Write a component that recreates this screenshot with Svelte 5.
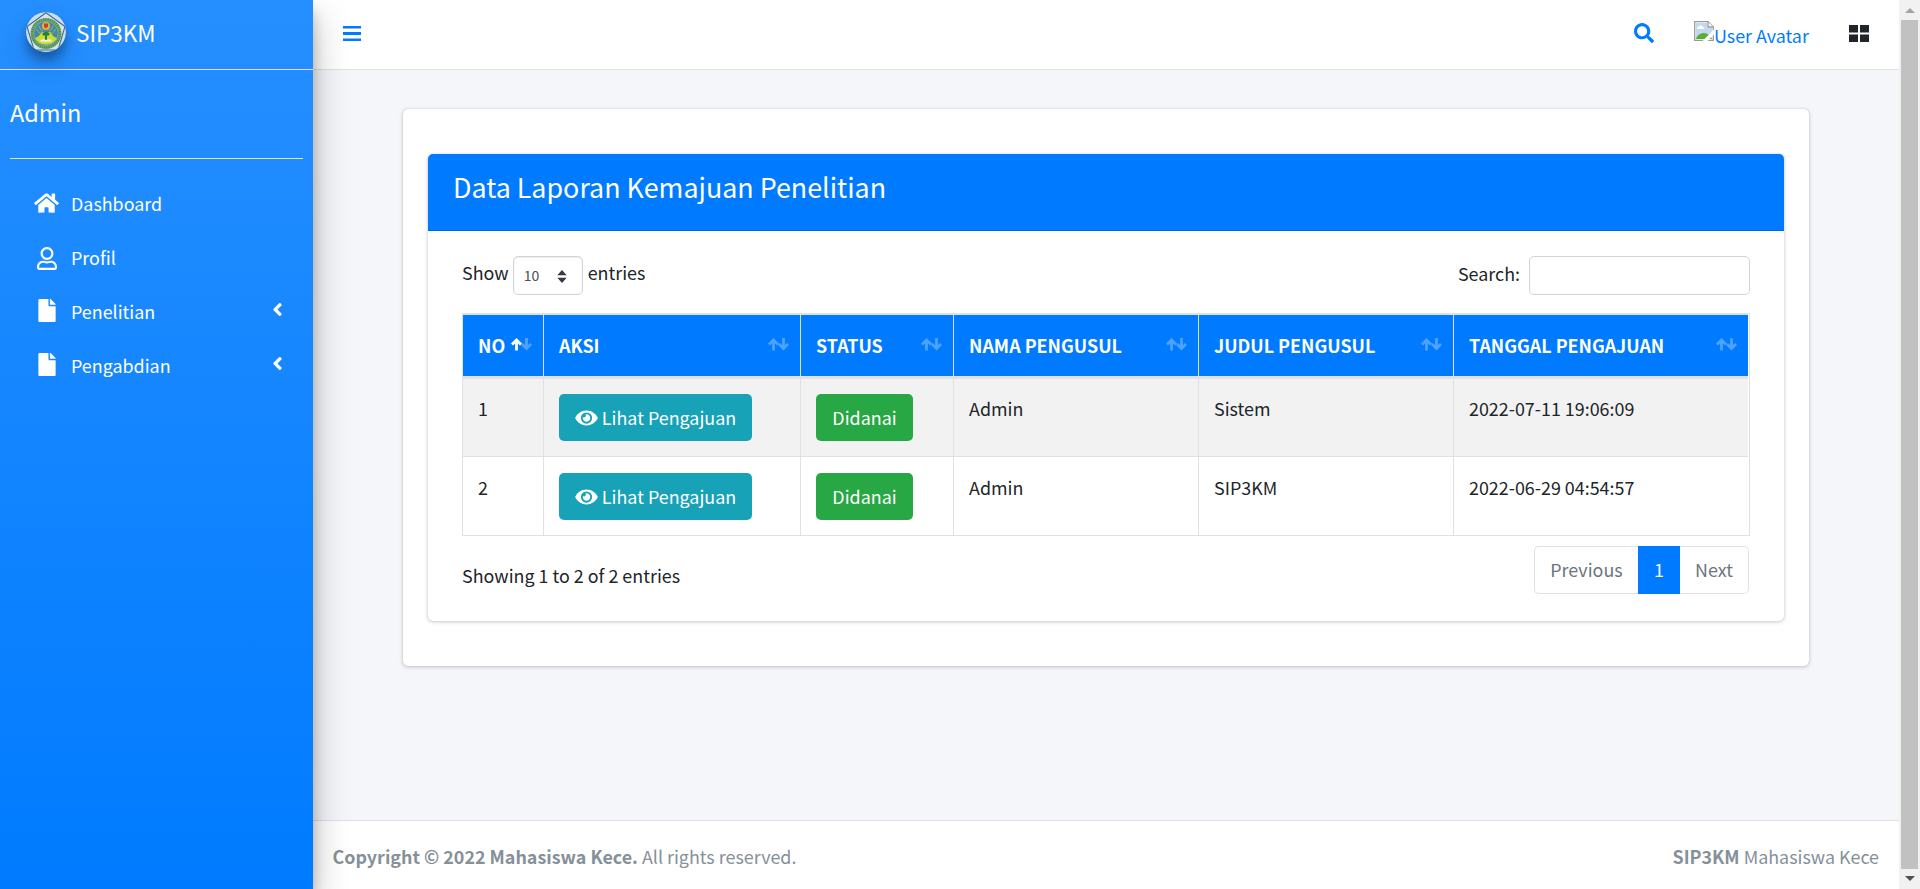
<script>
  const nav = [
    { label: 'Dashboard', icon: 'home' },
    { label: 'Profil', icon: 'user' },
    { label: 'Penelitian', icon: 'file', sub: true },
    { label: 'Pengabdian', icon: 'file', sub: true }
  ];
  const columns = ['NO', 'AKSI', 'STATUS', 'NAMA PENGUSUL', 'JUDUL PENGUSUL', 'TANGGAL PENGAJUAN'];
  const widths = [80, 257, 153, 245, 255, 295];
  const rows = [
    { no: 1, nama: 'Admin', judul: 'Sistem', tanggal: '2022-07-11 19:06:09' },
    { no: 2, nama: 'Admin', judul: 'SIP3KM', tanggal: '2022-06-29 04:54:57' }
  ];
</script>

<div class="screen">
  <aside class="sidebar">
    <div class="brand">
      <svg class="logo" viewBox="0 0 40 40">
        <defs><clipPath id="disc"><circle cx="20" cy="20" r="20" /></clipPath></defs>
        <g clip-path="url(#disc)">
          <rect width="40" height="40" fill="#c9dff0" />
          <path d="M20 .8 39 14.5 32 38H8L1 14.5Z" fill="#d3e4f1" stroke="#53677a" stroke-width="1.1" />
          <circle cx="20" cy="21.500" r="15.400" fill="#8fbb8c" />
          <circle cx="20" cy="21.500" r="13.800" fill="none" stroke="#4b8f5c" stroke-width="3" stroke-dasharray="1.600 .600" />
          <circle cx="20" cy="21.500" r="11.800" fill="#4488a8" />
          <path d="M9 26c4-1 5-4 7-6h8c2 2 3 5 7 6-2 4-6 6.500-11 6.500S11 30 9 26z" fill="#cfdc35" />
          <path d="M10.500 17q2.500 6 7.500 4M29.500 17q-2.500 6-7.500 4M13 14q1 4 4 5M27 14q-1 4-4 5" stroke="#b9b757" stroke-width=".9" fill="none" />
          <circle cx="20" cy="14" r="4" fill="#d9b640" />
          <path d="M18 11.500h4v3L20 16.500l-2-2z" fill="#cf3b32" />
          <path d="M20 20c3.500 0 4 2 3 3.500h-2V28h-2v-4.500h-2c-1-1.500-.5-3.500 3-3.500z" fill="#1f8240" />
          <path d="M14.500 28q3-1.500 5.500 0 2.500-1.500 5.500 0v2q-3-1-5.500 0-2.500-1-5.500 0z" fill="#e9f2e3" />
        </g>
      </svg>
      <span>SIP3KM</span>
    </div>
    <div class="user">Admin</div>
    <nav>
      {#each nav as item}
        <a class="item">
          <span class="ico {item.icon}">
            {#if item.icon === 'home'}
              <svg width="25" height="22" viewBox="0 0 576 512"><path d="M280.370 148.260L96 300.110V464a16 16 0 0 0 16 16l112.060-.290a16 16 0 0 0 15.920-16V368a16 16 0 0 1 16-16h64a16 16 0 0 1 16 16v95.640a16 16 0 0 0 16 16.050L464 480a16 16 0 0 0 16-16V300L295.670 148.260a12.190 12.190 0 0 0-15.300 0zM571.600 251.470L488 182.560V44.050a12 12 0 0 0-12-12h-56a12 12 0 0 0-12 12v72.610L318.470 43a48 48 0 0 0-61 0L4.340 251.470a12 12 0 0 0-1.600 16.900l25.500 31A12 12 0 0 0 45.150 301l235.220-193.740a12.190 12.190 0 0 1 15.300 0L530.900 301a12 12 0 0 0 16.900-1.600l25.500-31a12 12 0 0 0-1.700-16.930z" /></svg>
            {:else if item.icon === 'user'}
              <svg width="20" height="23" viewBox="0 0 448 512"><path d="M313.600 304c-28.700 0-42.500 16-89.600 16s-60.800-16-89.600-16C60.200 304 0 364.200 0 438.400V464c0 26.500 21.500 48 48 48h352c26.500 0 48-21.500 48-48v-25.600c0-74.200-60.200-134.400-134.400-134.400zM400 464H48v-25.600c0-47.600 38.800-86.400 86.400-86.400 14.600 0 38.300 16 89.600 16 51.700 0 74.900-16 89.600-16 47.600 0 86.400 38.800 86.400 86.400V464zM224 288c79.500 0 144-64.500 144-144S303.500 0 224 0 80 64.500 80 144s64.500 144 144 144zm0-240c52.900 0 96 43.100 96 96s-43.100 96-96 96-96-43.100-96-96 43.100-96 96-96z" /></svg>
            {:else}
              <svg width="18" height="23" viewBox="0 0 384 512"><path d="M224 136V0H24C10.700 0 0 10.700 0 24v464c0 13.300 10.700 24 24 24h336c13.300 0 24-10.700 24-24V160H248c-13.200 0-24-10.800-24-24zm160-14.100v6.100H256V0h6.100c6.400 0 12.500 2.500 17 7l97.900 98c4.500 4.500 7 10.600 7 16.900z" /></svg>
            {/if}
          </span>
          <span class="label">{item.label}</span>
          {#if item.sub}
            <svg class="chev" width="11" height="21" viewBox="0 0 256 512"><path d="M31.700 239l136-136c9.400-9.400 24.600-9.400 33.900 0l22.600 22.600c9.400 9.400 9.400 24.600 0 33.900L127.900 256l96.400 96.400c9.400 9.400 9.400 24.600 0 33.900L201.700 409c-9.400 9.400-24.600 9.400-33.900 0l-136-136c-9.500-9.400-9.500-24.600-.1-34z" /></svg>
          {/if}
        </a>
      {/each}
    </nav>
  </aside>

  <div class="page">
    <header>
      <svg class="bars" width="18" height="15" viewBox="0 0 18 15"><path d="M0 0h18v2.500H0zM0 6h18v3H0zM0 12.500h18V15H0z" /></svg>
      <svg class="find" width="20" height="20" viewBox="0 0 512 512"><path d="M505 442.700L405.300 343c-4.500-4.500-10.600-7-17-7H372c27.600-35.300 44-79.700 44-128C416 93.100 322.900 0 208 0S0 93.100 0 208s93.100 208 208 208c48.300 0 92.700-16.400 128-44v16.300c0 6.400 2.500 12.500 7 17l99.700 99.700c9.400 9.400 24.600 9.400 33.900 0l28.300-28.300c9.400-9.400 9.400-24.600.1-34zM208 336c-70.700 0-128-57.200-128-128 0-70.700 57.200-128 128-128 70.700 0 128 57.200 128 128 0 70.700-57.200 128-128 128z" /></svg>
      <svg class="broken" width="20" height="20" viewBox="0 0 20 20">
        <path d="M.7.700H14l5.300 5.300v13.300H.7z" fill="#fff" stroke="#9a9a9a" stroke-width="1.300" />
        <path d="M2 2h11v5h5v11H2z" fill="#c3d7f5" />
        <path d="M3 7.200c0-1.600 1.500-2 2-1.500.5-2 3-2 3.500 0 1.500 0 2 1.500 1.500 2.200H3z" fill="#fff" />
        <path d="M2 18c1-4 5-6 8-6s6 2 8 6z" fill="#58ad35" />
        <path d="M20 8.500 8.500 20h5L20 13.500z" fill="#fff" />
        <path d="M14 .7V6h5.300" fill="#fff" stroke="#9a9a9a" stroke-width="1.300" />
      </svg>
      <span class="avatar">User Avatar</span>
      <svg class="grid" width="20" height="17" viewBox="0 0 20 17"><path d="M0 0h9v7.500H0zM11 0h9v7.500h-9zM0 9.500h9V17H0zM11 9.500h9V17h-9z" /></svg>
    </header>

    <main>
      <section class="card outer">
        <section class="card inner">
          <h3>Data Laporan Kemajuan Penelitian</h3>
          <div class="body">
            <div class="tools">
              <span class="show">Show</span>
              <span class="select"><span>10</span>
                <svg width="10" height="13" viewBox="0 0 10 13"><path d="M5 0 9.700 5.300H.3zM5 13 .3 7.700h9.400z" /></svg>
              </span>
              <span class="entries">entries</span>
              <span class="search">Search:</span>
              <input aria-label="Search" />
            </div>
            <table>
              <colgroup>{#each widths as w}<col style="width: {w}px" />{/each}</colgroup>
              <thead>
                <tr>
                  {#each columns as c, i}
                    <th><div class="th"><span>{c}</span>
                      <svg width="21" height="13" viewBox="0 0 21 13" fill="none" stroke="#fff" stroke-width="2.800">
                        <path d="M5.500 12.500V2M1 6.500 5.500 2 10 6.500" opacity={i === 0 ? 1 : 0.3} />
                        <path d="M15.500 0v10.500M11 6l4.500 4.500L20 6" opacity=".3" />
                      </svg></div></th>
                  {/each}
                </tr>
              </thead>
              <tbody>
                {#each rows as r}
                  <tr>
                    <td>{r.no}</td>
                    <td><button class="btn info">
                      <svg width="23" height="20" viewBox="0 0 576 512"><path d="M572.520 241.400C518.290 135.590 410.930 64 288 64S57.680 135.640 3.480 241.410a32.350 32.350 0 0 0 0 29.190C57.710 376.410 165.070 448 288 448s230.320-71.640 284.520-177.410a32.350 32.350 0 0 0 0-29.190zM288 400a144 144 0 1 1 144-144 143.930 143.930 0 0 1-144 144zm0-240a95.310 95.310 0 0 0-25.310 3.790 47.850 47.850 0 0 1-66.900 66.900A95.780 95.780 0 1 0 288 160z" /></svg>
                      <span>Lihat Pengajuan</span></button></td>
                    <td><button class="btn ok"><span>Didanai</span></button></td>
                    <td>{r.nama}</td>
                    <td>{r.judul}</td>
                    <td>{r.tanggal}</td>
                  </tr>
                {/each}
              </tbody>
            </table>
            <div class="foot">
              <span class="info-text">Showing 1 to 2 of 2 entries</span>
              <div class="pager">
                <span class="prev">Previous</span><span class="cur">1</span><span class="next">Next</span>
              </div>
            </div>
          </div>
        </section>
      </section>
    </main>

    <footer>
      <span><b>Copyright © 2022 Mahasiswa Kece.</b> All rights reserved.</span>
      <span><b>SIP3KM</b> Mahasiswa Kece</span>
    </footer>
  </div>

  <div class="scroll">
    <svg width="10" height="5" viewBox="0 0 10 5"><path d="M5 0l5 5H0z" fill="#a3a3a3" /></svg>
    <div class="thumb"></div>
    <svg width="10" height="5" viewBox="0 0 10 5"><path d="M5 5l5-5H0z" fill="#505050" /></svg>
  </div>
</div>

<style>
  :global(body) { margin: 0; overflow: hidden; }
  .screen, .screen :global(*) { box-sizing: border-box; }
  .screen {
    display: flex; width: 1920px; height: 889px; overflow: hidden;
    font-family: "Noto Sans CJK SC", "Noto Sans", sans-serif;
    font-size: 17.9px; line-height: 30px; color: #212529; background: #f4f6f9;
  }
  svg { display: block; flex: none; }
  .sidebar {
    width: 313px; flex: none; color: #fff; position: relative; z-index: 2;
    background: linear-gradient(180deg, #268fff, #007bff);
    box-shadow: 0 17px 35px rgba(0,0,0,.25), 0 12px 12px rgba(0,0,0,.22);
  }
  .brand {
    height: 70px; display: flex; align-items: center; padding: 0 0 5px 26px; gap: 10px;
    border-bottom: 1px solid #dee2e6; font-size: 22.5px;
  }
  .logo { width: 40px; height: 40px; border-radius: 50%; box-shadow: 0 12px 24px rgba(0,0,0,.19), 0 8px 8px rgba(0,0,0,.23); }
  .user { margin: 0 10px; height: 89px; padding-top: 27px; border-bottom: 1px solid #dee2e6; font-size: 23.5px; }
  nav { padding: 17px 10px 0; }
  .item { display: flex; align-items: center; height: 54px; padding: 0 20px; }
  .item svg { fill: currentColor; }
  .ico { width: 35px; display: flex; justify-content: center; margin: 0 7px 1px -1px; }
  .ico.user, .item .ico.user { height: auto; padding: 1px 0 0; border: 0; margin: 1px 7px 0 -1px; }
  .label { flex: 1; }
  .chev { margin: 0 0 3px 0; }
  .page { flex: 1; display: flex; flex-direction: column; min-width: 0; }
  header {
    height: 70px; flex: none; background: #fff; border-bottom: 1px solid #dee2e6;
    display: flex; align-items: center; padding: 0 30px 3px 30px; color: #007bff;
  }
  header svg { fill: #007bff; }
  .find { margin-left: auto; }
  .broken { margin: 0 0 4px 40px; }
  .avatar { width: 95px; white-space: nowrap; padding-top: 4px; }
  .grid { margin-left: 40px; }
  header .grid { fill: #212529; }
  main { flex: 1; padding: 39px 90px 0; }
  .card { background: #fff; border-radius: 5px; box-shadow: 0 0 1px rgba(0,0,0,.25), 0 1px 4px rgba(0,0,0,.2); }
  .outer { height: 557px; padding: 45px 25px 0; }
  .inner { height: 467px; }
  h3 {
    margin: 0; height: 77px; padding: 15px 25px; color: #fff; background: #007bff;
    border-bottom: 1px solid #0069d9; border-radius: 5px 5px 0 0;
    font-size: 26.85px; font-weight: 400; line-height: 36px;
  }
  .body { padding: 25px 34px 0; }
  .tools { display: flex; height: 57px; align-items: flex-start; line-height: 36px; }
  .show, .entries { margin-top: -2px; }
  .select {
    width: 70px; height: 39px; margin: 0 5px 0 4px; padding: 2px 15px 0 10px;
    border: 1px solid #ced4da; border-radius: 5px; box-shadow: inset 0 1px 2px rgba(0,0,0,.08);
    display: flex; justify-content: space-between; align-items: center; font-size: 14px; color: #495057;
  }
  .select span { padding-bottom: 4px; }
  .select svg { fill: #343a40; }
  .search { margin: -1px 0 0 auto; }
  input { width: 221px; height: 39px; margin-left: 9px; border: 1px solid #ced4da; border-radius: 5px; background: #fff; }
  table { width: 1288px; table-layout: fixed; border-collapse: separate; border-spacing: 0; border: 1px solid #dee2e6; padding-right: 1px; }
  th {
    height: 65px; padding: 0 11px 2px 15px; border: 0 solid #dee2e6; border-width: 1px 0 3px 1px;
    background: #007bff; color: #fff; text-align: left; font-weight: 700; white-space: nowrap;
  }
  th:first-child, td:first-child { border-left: 0; }
  .th { display: flex; justify-content: space-between; }
  .th svg { margin-top: 8px; }
  td { height: 78px; padding: 14px 15px 0; border: 0 solid #dee2e6; border-width: 0 0 1px 1px; vertical-align: top; }
  tbody tr:first-child td { background: #f2f2f2; }
  tbody tr:last-child td { border-bottom: 0; padding-top: 15px; }
  .btn {
    height: 47px; border: 0; border-radius: 5px; color: #fff; font: inherit; padding: 0; margin-top: 1px;
    display: flex; align-items: center; justify-content: center;
  }
  .btn svg { fill: #fff; margin-right: 4px; }
  .btn span { padding-bottom: 2px; }
  .info { width: 193px; background: #17a2b8; }
  .ok { width: 97px; background: #28a745; }
  .foot { display: flex; justify-content: space-between; padding-top: 10px; }
  .info-text { padding-top: 14px; }
  .pager { display: flex; height: 48px; line-height: 46px; text-align: center; color: #6c757d; margin-right: 1px; }
  .prev { width: 104px; border: 1px solid #dee2e6; border-right: 0; border-radius: 5px 0 0 5px; line-height: 44px; }
  .cur { width: 42px; background: #007bff; color: #fff; }
  .next { width: 69px; border: 1px solid #dee2e6; border-left: 0; border-radius: 0 5px 5px 0; line-height: 44px; }
  footer {
    height: 69px; flex: none; background: #fff; border-top: 1px solid #dee2e6; color: #869099;
    display: flex; justify-content: space-between; padding: 20px 20px 0 19.500px;
  }
  .scroll { width: 21px; flex: none; background: #f1f1f1; display: flex; flex-direction: column; align-items: center; padding: 8px 0; justify-content: space-between; }
  .thumb { width: 17px; height: 849px; background: #c1c1c1; }
</style>
